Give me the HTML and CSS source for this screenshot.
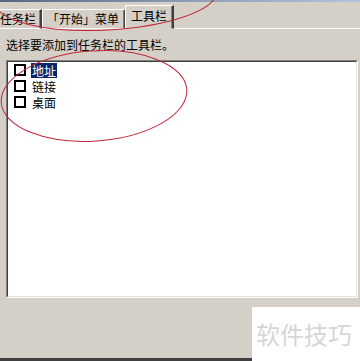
FILE: index.html
```html
<!DOCTYPE html>
<html lang="zh-CN">
<head>
  <meta charset="UTF-8">
  <title>任务栏和「开始」菜单属性</title>
  <link rel="stylesheet" href="styles.css">
</head>
<body>

<div class="window">
  <div class="edge"></div>

  <div class="tabs">
    <div class="tab tab-cut">任务栏</div>
    <div class="tab">「开始」菜单</div>
    <div class="tab active">工具栏</div>
    <div class="tab-rest"></div>
  </div>

  <div class="panel">
    <p class="hint">选择要添加到任务栏的工具栏。</p>

    <div class="sunken">
      <div class="listbox">
        <div class="item">
          <span class="check"></span>
          <span class="name selected">地址</span>
        </div>
        <div class="item">
          <span class="check"></span>
          <span class="name">链接</span>
        </div>
        <div class="item">
          <span class="check"></span>
          <span class="name">桌面</span>
        </div>
      </div>
    </div>
  </div>

  <div class="footer"></div>

  <div class="watermark">软件技巧</div>

  <!-- 红色标注圈 -->
  <svg class="marks" width="360" height="361" viewBox="0 0 360 361">
    <ellipse cx="106" cy="-2" rx="110" ry="32" transform="rotate(-3 106 -2)" />
    <ellipse cx="94" cy="96" rx="93" ry="45" transform="rotate(-4 94 96)" />
  </svg>
</div>

</body>
</html>
```

FILE: styles.css
```css
body {
  margin: 0;
  background: #d4d0c8;
  font-family: "Noto Sans CJK SC", "Noto Sans", sans-serif;
  font-size: 12px;
  color: #000;
}

.window {
  position: relative;
  width: 360px;
  height: 361px;
  overflow: hidden;
  background: #d4d0c8;
  display: flex;
  flex-direction: column;
}

.edge {
  height: 2px;
  background: linear-gradient(to right, #5a6680, #8d9ab4 50%, #b4c2d8);
}

.tabs {
  display: flex;
  align-items: flex-end;
  height: 27px;
}

.tab {
  height: 18px;
  line-height: 18px;
  padding: 0 5px 0 4px;
  border-top: 1px solid #fff;
  border-left: 1px solid #fff;
  border-right: 2px solid #404040;
  box-shadow: inset -1px 0 0 #808080;
  border-bottom: 1px solid #fff;
  white-space: nowrap;
}

.tab-cut {
  margin-left: -5px;
  padding-right: 4px;
}

.tab.active {
  height: 22px;
  line-height: 20px;
  padding: 0 5px;
  border-bottom-color: #d4d0c8;
  margin-left: -1px;
}

.tab-rest {
  flex: 1;
  border-bottom: 1px solid #fff;
}

.panel {
  padding: 0 2px 0 6px;
}

.hint {
  margin: 8px 0 7px;
  line-height: 16px;
}

.sunken {
  border-top: 1px solid #808080;
  border-left: 1px solid #808080;
  border-right: 1px solid #fff;
  border-bottom: 1px solid #fff;
}

.listbox {
  box-sizing: border-box;
  height: 236px;
  background: #fff;
  border-top: 1px solid #404040;
  border-left: 1px solid #404040;
  border-right: 1px solid #e4e2dc;
  border-bottom: 1px solid #e4e2dc;
  padding-top: 0;
}

.item {
  display: flex;
  align-items: center;
  height: 16px;
  padding-left: 6px;
}

.check {
  width: 8px;
  height: 8px;
  border: 2px solid #000;
  background: #fff;
  margin-right: 5px;
}

.name {
  padding: 0 1px;
  line-height: 15px;
}

.name.selected {
  background: #0a246a;
  color: #fff;
}

.footer {
  flex: 1;
  border-bottom: 3px solid #404040;
}

.watermark {
  position: absolute;
  right: 0;
  bottom: 0;
  width: 108px;
  height: 54px;
  background: #fff;
  color: #d6d6d6;
  font-size: 24px;
  line-height: 54px;
  padding-left: 4px;
  box-sizing: border-box;
}

.marks {
  position: absolute;
  left: 0;
  top: 0;
  pointer-events: none;
}

.marks ellipse {
  fill: none;
  stroke: #c0283a;
  stroke-width: 1;
}
```
